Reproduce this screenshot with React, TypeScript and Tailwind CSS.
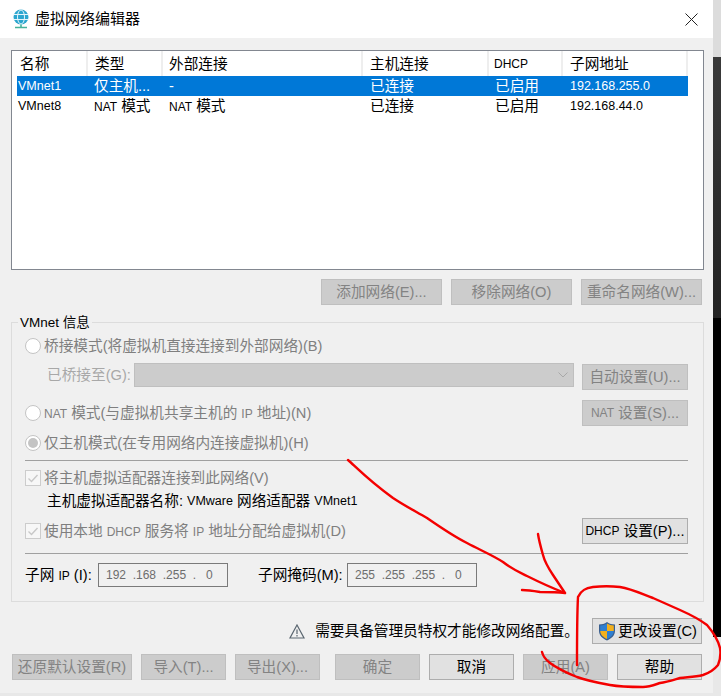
import type { ReactNode } from "react";

const cjk = "font-['Liberation_Sans','Noto_Sans_CJK_SC',sans-serif]";

// latin words sit noticeably smaller next to the CJK text in the reference
function L({ children }: { children: ReactNode }) {
  return <span className="text-[12px]">{children}</span>;
}

const columns = [
  { name: "名称", width: "w-[71px]", head: "pl-[3px]", cell: "pl-[1px]" },
  { name: "类型", width: "w-[75px]", head: "pl-[7px]", cell: "pl-[6px]" },
  { name: "外部连接", width: "w-[200px]", head: "pl-[6px]", cell: "pl-[6px]" },
  { name: "主机连接", width: "w-[126px]", head: "pl-[7px]", cell: "pl-[7px]" },
  { name: "DHCP", width: "w-[74px]", head: "pl-[5px]", cell: "pl-[6px]" },
  { name: "子网地址", width: "w-[125px]", head: "pl-[7px]", cell: "pl-[7px]" },
];

const rows: { id: string; cells: ReactNode[] }[] = [
  { id: "VMnet1", cells: ["VMnet1", "仅主机...", "-", "已连接", "已启用", "192.168.255.0"] },
  {
    id: "VMnet8",
    cells: [
      "VMnet8",
      <><L>NAT</L> 模式</>,
      <><L>NAT</L> 模式</>,
      "已连接",
      "已启用",
      "192.168.44.0",
    ],
  },
];

function Btn({ children, w, on, className = "" }: { children: ReactNode; w: string; on?: boolean; className?: string }) {
  return (
    <div
      className={`h-[26px] ${w} shrink-0 flex items-center justify-center border text-[14.67px] whitespace-nowrap ${
        on ? "bg-[#e1e1e1] border-[#adadad] text-black" : "bg-[#cccccc] border-[#bfbfbf] text-[#838383]"
      } ${className}`}
    >
      {children}
    </div>
  );
}

function Radio({ checked }: { checked?: boolean }) {
  return (
    <span className="w-[16px] h-[16px] rounded-full border border-[#c4c4c4] bg-white flex items-center justify-center shrink-0">
      {checked && <span className="w-[10px] h-[10px] rounded-full bg-[#c4c4c4]" />}
    </span>
  );
}

function Check() {
  return (
    <span className="w-[16px] h-[16px] border border-[#cccccc] bg-[#f7f7f7] flex items-center justify-center shrink-0">
      <svg width="12" height="12" viewBox="0 0 12 12" fill="none">
        <path d="M1.5 6.5 L4.5 9.5 L10.5 3" stroke="#c8c8c8" strokeWidth="1.4" />
      </svg>
    </span>
  );
}

function IpField({ value }: { value: string }) {
  return (
    <div className="w-[130px] h-[24px] shrink-0 border border-[#7a7a7a] bg-[#f0f0f0] flex items-center pl-[7px] text-[#6d6d6d] text-[12px] whitespace-pre">
      {value}
    </div>
  );
}

export default function App() {
  return (
    <div className={`w-[721px] h-[696px] bg-[#e8e8e8] overflow-hidden relative flex ${cjk}`}>
      <div className="w-[713px] h-[693px] shrink-0 bg-[#f0f0f0] flex flex-col">
        <div className="h-[38px] bg-white flex items-center pl-[12px] pr-[15px]">
          <svg width="18" height="20" viewBox="0 0 18 20" fill="none">
            <circle cx="9" cy="8" r="7.5" fill="#2ba6cf" />
            <ellipse cx="9" cy="8" rx="3.5" ry="7" stroke="#e4f5fb" strokeWidth="1" />
            <path d="M1.5 5.5H16.5M1.5 10.5H16.5" stroke="#e4f5fb" strokeWidth="1" />
            <path d="M9 15.5V18M3 18.5H15" stroke="#46b29a" strokeWidth="1.6" />
          </svg>
          <span className="ml-[5px] text-[15px] text-black">虚拟网络编辑器</span>
          <svg className="ml-auto" width="13" height="13" viewBox="0 0 13 13" fill="none">
            <path d="M0.5 0.5L12.5 12.5M12.5 0.5L0.5 12.5" stroke="#222" strokeWidth="1" />
          </svg>
        </div>

        <div className="ml-[11px] mt-[12px] h-[220px] w-[693px] border border-[#828790] bg-white pl-[5px]">
          <div className="flex h-[25px]">
            {columns.map((c) => (
              <div
                key={c.name}
                className={`${c.width} ${c.head} ${c.name === "DHCP" ? "text-[12px]" : "text-[14.67px]"} flex items-center border-r-2 border-[#eeeeee] text-black`}
              >
                {c.name}
              </div>
            ))}
          </div>
          {rows.map((row, i) => (
            <div key={row.id} className={`flex h-[20px] items-center w-[671px] ${i === 0 ? "bg-[#0078d7] text-white" : "text-black"}`}>
              {row.cells.map((cell, j) => (
                <div
                  key={j}
                  className={`${columns[j].width} ${columns[j].cell} whitespace-nowrap ${j === 0 || j === 5 ? "text-[12.5px]" : "text-[14.67px]"}`}
                >
                  {cell}
                </div>
              ))}
            </div>
          ))}
        </div>

        <div className="flex justify-end gap-[9px] mt-[9px] mr-[11px]">
          <Btn w="w-[121px]">添加网络(E)...</Btn>
          <Btn w="w-[121px]">移除网络(O)</Btn>
          <Btn w="w-[121px]">重命名网络(W)...</Btn>
        </div>

        <div className="relative ml-[11px] mt-[17px] h-[280px] w-[693px] border border-[#dcdcdc] pl-[13px] pr-[15px] pt-[12px] text-[14.67px] text-[#7f7f7f] whitespace-nowrap">
          <span className="absolute left-[6px] -top-[10px] px-[2px] bg-[#f0f0f0] text-black text-[13.5px]">VMnet 信息</span>
          <div className="flex items-center gap-[3px] h-[22px]">
            <Radio />
            <span>桥接模式(将虚拟机直接连接到外部网络)(B)</span>
          </div>
          <div className="flex mt-[6px] h-[27px]">
            <span className="ml-[22px] w-[87px] h-[24px] flex items-center text-[#a8a8a8]">已桥接至(G):</span>
            <div className="w-[440px] h-[24px] bg-[#cccccc] border border-[#bfbfbf] flex items-center justify-end pr-[5px]">
              <svg width="10" height="6" viewBox="0 0 10 6" fill="none">
                <path d="M0.5 0.5L5 5L9.5 0.5" stroke="#a8a8a8" />
              </svg>
            </div>
            <Btn w="w-[106px]" className="ml-[8px] mt-[1px]">自动设置(U)...</Btn>
          </div>
          <div className="flex items-center mt-[10px] h-[26px] gap-[3px]">
            <Radio />
            <span><L>NAT</L> 模式(与虚拟机共享主机的 <L>IP</L> 地址)(N)</span>
            <Btn w="w-[106px]" className="ml-auto"><L>NAT</L>&nbsp;设置(S)...</Btn>
          </div>
          <div className="flex items-center gap-[3px] h-[22px] mt-[6px]">
            <Radio checked />
            <span>仅主机模式(在专用网络内连接虚拟机)(H)</span>
          </div>
          <div className="h-px bg-[#a0a0a0] mt-[6px]" />
          <div className="flex items-center gap-[3px] h-[22px] mt-[6px]">
            <Check />
            <span>将主机虚拟适配器连接到此网络(V)</span>
          </div>
          <div className="ml-[22px] mt-[1px] h-[22px] flex items-center text-black whitespace-pre">
            主机虚拟适配器名称: <span className="text-[12.5px]">VMware</span> 网络适配器 <span className="text-[12.5px]">VMnet1</span>
          </div>
          <div className="flex items-center gap-[3px] h-[26px] mt-[6px]">
            <Check />
            <span>使用本地 <L>DHCP</L> 服务将 <L>IP</L> 地址分配给虚拟机(D)</span>
            <Btn w="w-[106px]" on className="ml-auto"><L>DHCP</L>&nbsp;设置(P)...</Btn>
          </div>
          <div className="h-px bg-[#a0a0a0] mt-[9px]" />
          <div className="flex items-center mt-[9px] text-black">
            <span className="w-[73px]">子网 <L>IP</L> (I):</span>
            <IpField value="192  .168  .255  .   0" />
            <span className="ml-[30px] w-[89px]">子网掩码(M):</span>
            <IpField value="255  .255  .255  .   0" />
          </div>
        </div>

        <div className="flex items-center justify-end mt-[16px] mr-[11px] h-[26px]">
          <svg width="16" height="15" viewBox="0 0 16 15" fill="none">
            <path d="M8 1L15 14H1Z" stroke="#5a6670" strokeWidth="1.2" />
            <path d="M8 5.500V10M8 11V12.500" stroke="#5a6670" strokeWidth="1.200" />
          </svg>
          <span className="ml-[10px] text-[14.67px] text-black">需要具备管理员特权才能修改网络配置。</span>
          <div className="ml-[13px] w-[110px] h-[26px] shrink-0 border border-[#adadad] bg-[#e1e1e1] flex items-center pl-[5px] text-[14.67px] text-black whitespace-nowrap">
            <svg width="18" height="20" viewBox="0 0 18 20">
              <path d="M9 1C6.500 2.800 4 3.400 1 3.500V10c0 4.500 3.500 7.600 8 9.500 4.500-1.900 8-5 8-9.500V3.500C14 3.400 11.500 2.800 9 1Z" fill="#3a5f8f" />
              <path d="M9 2.500V10H2.200V4.600C4.800 4.400 7 3.800 9 2.500Z" fill="#2f7fd1" />
              <path d="M9 2.500V10H15.800V4.600C13.200 4.400 11 3.800 9 2.500Z" fill="#f2b01e" />
              <path d="M2.200 10H9V18C5.500 16.500 2.500 14 2.200 10Z" fill="#f2b01e" />
              <path d="M15.800 10H9V18C12.500 16.500 15.500 14 15.800 10Z" fill="#2f7fd1" />
            </svg>
            <span className="ml-[2px]">更改设置(C)</span>
          </div>
        </div>

        <div className="flex mt-[10px] ml-[12px]">
          <Btn w="w-[120px]">还原默认设置(R)</Btn>
          <Btn w="w-[85px]" className="ml-[9px]">导入(T)...</Btn>
          <Btn w="w-[85px]" className="ml-[9px]">导出(X)...</Btn>
          <Btn w="w-[85px]" className="ml-[15px]">确定</Btn>
          <Btn w="w-[85px]" on className="ml-[9px]">取消</Btn>
          <Btn w="w-[85px]" className="ml-[9px]">应用(A)</Btn>
          <Btn w="w-[85px]" on className="ml-[9px]">帮助</Btn>
        </div>
      </div>

      {/* desktop showing behind the window */}
      <div className="flex-1 flex flex-col">
        <div className="h-[57px] bg-[#dcdcdc]" />
        <div className="h-[261px] bg-gradient-to-b from-[#3a3a3a] to-[#222222]" />
        <div className="h-[319px] bg-black" />
      </div>

      <svg className="absolute inset-0 pointer-events-none" width="721" height="696" viewBox="0 0 721 696" fill="none" stroke="#f40000" strokeWidth="2.4" strokeLinejoin="round" strokeLinecap="round">
        <path d="M348 460C356 467 368 480 393 498C405 506 415 511 427 518C440 527 453 536 467 543C480 550 492 555 503 562C512 569 519 572 527 576C535 580 552 588 565 593" />
        <path d="M538 534C539 541 541 548 543 555C545 563 549 569 553 575C557 581 561 587 565 593C556 592 548 592 540 592C534 591 528 590 522 590" />
        <path d="M577 665C577 640 577 615 578 597C581 590 586 588 593 587C602 586 611 586 620 587C632 589 642 594 653 598C662 602 671 606 680 610C689 614 699 619 707 625C713 632 718 640 720 648C721 654 720 660 718 665C714 670 709 673 703 675C695 677 688 677 680 678C673 680 667 682 660 683C654 685 649 687 643 687C632 687 621 687 610 685C599 683 588 681 577 677C567 673 558 669 550 663C546 660 543 656 542 652" />
      </svg>
    </div>
  );
}
